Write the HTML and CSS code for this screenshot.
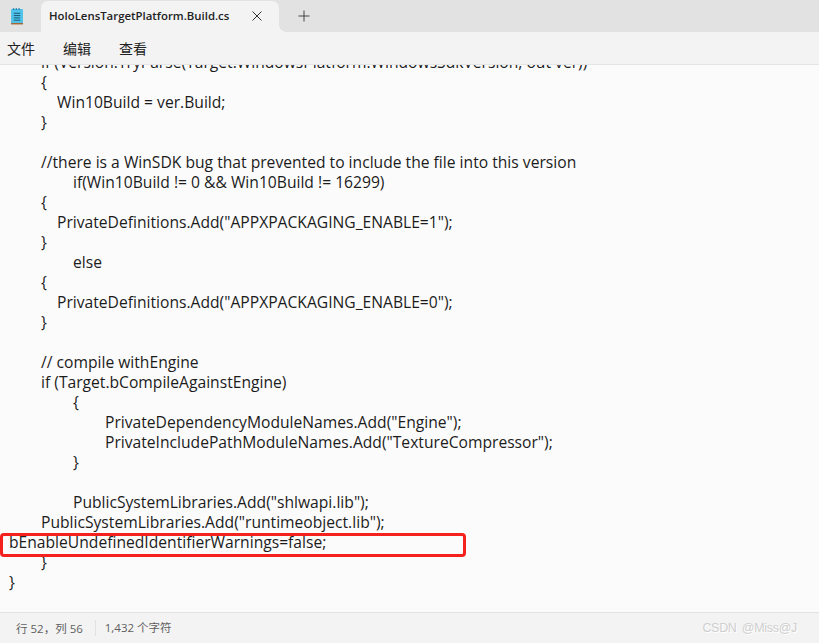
FILE: index.html
```html
<!DOCTYPE html>
<html lang="zh">
<head>
<meta charset="utf-8">
<title>HoloLensTargetPlatform.Build.cs</title>
<link rel="stylesheet" href="styles.css">
</head>
<body>
<div class="window">
  <header class="tabbar">
    <div class="app-icon">
      <svg width="12" height="17" viewBox="0 0 13 18">
        <rect x="0" y="1" width="13" height="15.500" rx="1" fill="#4fc3ea"/>
        <rect x="0" y="16" width="13" height="1.600" fill="#a5683a"/>
        <path d="M2 0h1.500v2H2zM5 0h1.500v2H5zM8 0h1.500v2H8z" fill="#1f7fb0"/>
        <path d="M3 5.500h7M3 8h7M3 10.500h7M3 13h7" stroke="#14506f" stroke-width="1"/>
      </svg>
    </div>
    <div class="tab">
      <span class="tab-title">HoloLensTargetPlatform.Build.cs</span>
      <svg class="tab-close" width="10" height="10" viewBox="0 0 10 10"><path d="M0.500 0.500l9 9M9.500 0.500l-9 9" stroke="#333" stroke-width="1" fill="none"/></svg>
    </div>
    <svg class="tab-add" width="12" height="12" viewBox="0 0 12 12"><path d="M6 0.500v11M0.500 6h11" stroke="#444" stroke-width="1" fill="none"/></svg>
  </header>
  <nav class="menubar">
    <span class="menu-item">文件</span>
    <span class="menu-item">编辑</span>
    <span class="menu-item">查看</span>
  </nav>
  <main class="editor">
    <div class="code">
      <div class="line i1">if (Version.TryParse(Target.WindowsPlatform.WindowsSdkVersion, out ver))</div>
      <div class="line i1">{</div>
      <div class="line i2">Win10Build = ver.Build;</div>
      <div class="line i1">}</div>
      <div class="line"></div>
      <div class="line i1">//there is a WinSDK bug that prevented to include the file into this version</div>
      <div class="line i3">if(Win10Build != 0 &amp;&amp; Win10Build != 16299)</div>
      <div class="line i1">{</div>
      <div class="line i2">PrivateDefinitions.Add("APPXPACKAGING_ENABLE=1");</div>
      <div class="line i1">}</div>
      <div class="line i3">else</div>
      <div class="line i1">{</div>
      <div class="line i2">PrivateDefinitions.Add("APPXPACKAGING_ENABLE=0");</div>
      <div class="line i1">}</div>
      <div class="line"></div>
      <div class="line i1">// compile withEngine</div>
      <div class="line i1">if (Target.bCompileAgainstEngine)</div>
      <div class="line i3">{</div>
      <div class="line i4">PrivateDependencyModuleNames.Add("Engine");</div>
      <div class="line i4">PrivateIncludePathModuleNames.Add("TextureCompressor");</div>
      <div class="line i3">}</div>
      <div class="line"></div>
      <div class="line i3">PublicSystemLibraries.Add("shlwapi.lib");</div>
      <div class="line i1">PublicSystemLibraries.Add("runtimeobject.lib");</div>
      <div class="line">bEnableUndefinedIdentifierWarnings=false;</div>
      <div class="line i1">}</div>
      <div class="line">}</div>
    </div>
    <div class="highlight"></div>
  </main>
  <footer class="statusbar">
    <span class="status-pos">行 52，列 56</span>
    <span class="status-count">1,432 个字符</span>
    <span class="watermark">CSDN @Miss@J</span>
  </footer>
</div>
</body>
</html>
```
FILE: styles.css
```css
* { box-sizing: border-box; }
html, body { margin: 0; height: 100%; }
body { font-family: "Open Sans", "Noto Sans CJK SC", sans-serif; color: #1a1a1a; overflow: hidden; }
.window { width: 819px; height: 643px; display: flex; flex-direction: column; background: #fbfbfb; }
.tabbar { height: 32px; flex: none; display: flex; align-items: flex-end; background: #e2e2e2; }
.app-icon { width: 41px; height: 32px; flex: none; display: flex; align-items: center; justify-content: center; padding-right: 7px; }
.tab { position: relative; width: 238px; height: 31px; flex: none; display: flex; align-items: center; justify-content: space-between; padding: 0 17px 2px 8px; background: #f3f3f3; border-radius: 7px 7px 0 0; }
.tab::after { content: ""; position: absolute; left: 100%; bottom: 0; width: 7px; height: 7px; background: radial-gradient(circle at 100% 0, #e2e2e2 6.500px, #f3f3f3 7px); }
.tab-title { font-size: 11.400px; font-weight: 600; color: #222; font-family: "Open Sans", sans-serif; }
.tab-close { flex: none; }
.tab-add { flex: none; margin: 0 0 10px 19px; }
.menubar { height: 33px; flex: none; display: flex; align-items: center; gap: 28px; padding: 0 7px 1px; background: #f3f3f3; border-bottom: 1px solid #e5e5e5; }
.menu-item { font-size: 14px; font-family: "Noto Sans CJK SC", sans-serif; color: #222; }
.editor { flex: 1; min-height: 0; position: relative; overflow: hidden; background: #fbfbfb; }
.code { margin-top: -13px; padding-left: 9px; font-size: 15.650px; line-height: 20px; color: #1c1c1c; }
.line { height: 20px; white-space: pre; }
.i1 { padding-left: 32px; }
.i2 { padding-left: 48px; }
.i3 { padding-left: 64px; }
.i4 { padding-left: 96px; }
.highlight { position: absolute; left: 0; top: 468px; width: 466px; height: 24px; border: 3px solid #f5211d; border-radius: 4px; }
.statusbar { height: 31px; flex: none; display: flex; align-items: center; background: #f3f3f3; border-top: 1px solid #e2e2e2; font-size: 11.500px; color: #5f5f5f; font-family: "Open Sans", "Noto Sans CJK SC", sans-serif; }
.status-pos { padding: 0 12px 0 16px; }
.status-count { padding-left: 9px; border-left: 1px solid #e2e2e2; line-height: 16px; }
.watermark { margin-left: auto; margin-right: 22px; font-size: 12.500px; letter-spacing: -0.3px; word-spacing: 2px; color: #cfcfcf; text-shadow: 1px 1px 0 #ffffff; font-family: "Liberation Sans", sans-serif; }
```
